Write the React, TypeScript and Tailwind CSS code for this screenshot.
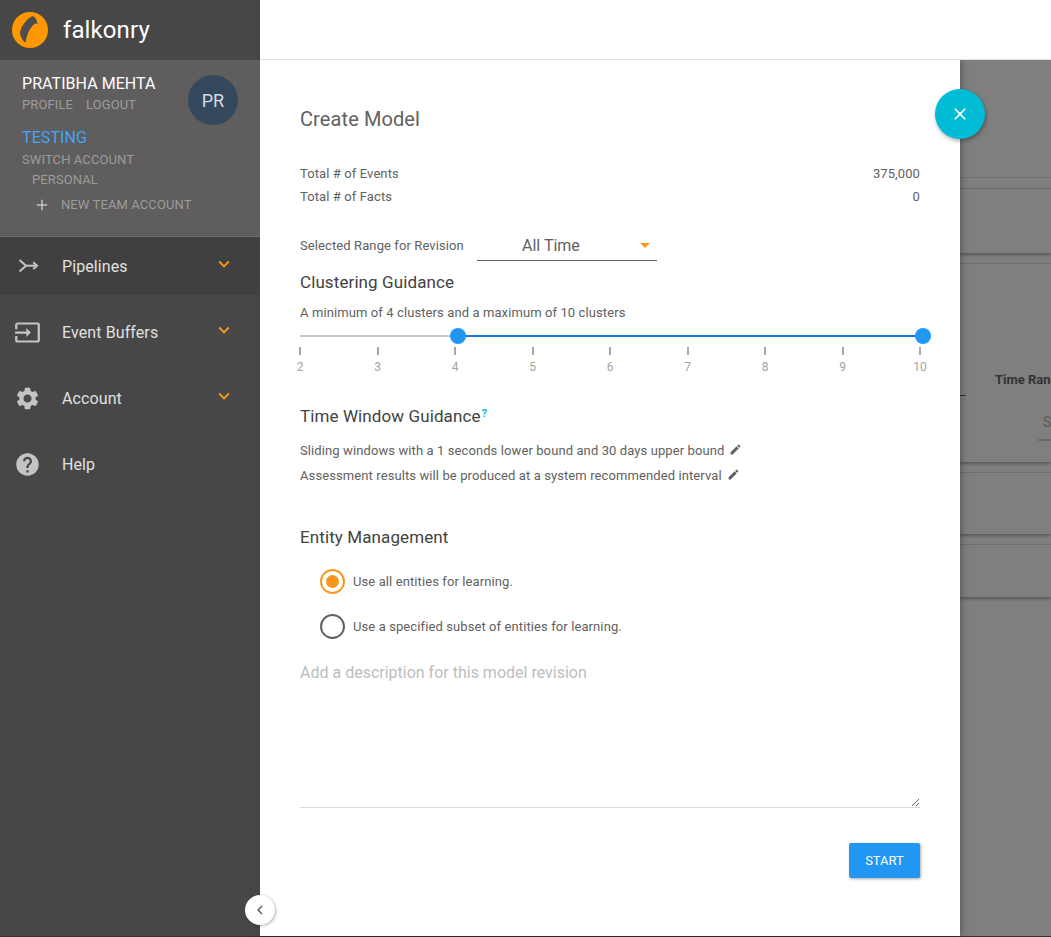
import { MdEdit, MdHelp, MdInput, MdKeyboardArrowDown, MdSettings, MdClose, MdAdd, MdChevronLeft } from "react-icons/md";

const PipelinesIcon = () => (
  <svg width="24" height="24" viewBox="0 0 24 24" fill="none" stroke="#c4c4c4" strokeWidth="2">
    <path d="M3.500 6 10 11.700 3.500 17.500" />
    <path d="M10 11.700h11" />
    <path d="M17.300 8.300 21 11.700 17.300 15" />
  </svg>
);

const Logo = () => (
  <svg width="36" height="36" viewBox="0 0 36 36" className="shrink-0">
    <circle cx="18" cy="18" r="18" fill="#ff9800" />
    <path d="M21 4C23.500 5 25 8.500 25.700 12C24 11 22.500 11.500 21.300 13C18.500 15.500 16.500 19.500 15 24C14.300 26 13.800 28.500 13.500 30.700C11 29 8.500 25 8 21C9 14 15 6 21 4Z" fill="#4d4d4d" />
  </svg>
);

const navItems = [
  { label: "Pipelines", icon: <PipelinesIcon />, arrow: true, active: true },
  { label: "Event Buffers", icon: <MdInput size={27} color="#c4c4c4" />, arrow: true },
  { label: "Account", icon: <MdSettings size={27} color="#c4c4c4" />, arrow: true },
  { label: "Help", icon: <MdHelp size={27} color="#c4c4c4" /> },
];

const Sidebar = () => (
  <aside className="w-[260px] shrink-0 bg-[#474747] flex flex-col relative z-10">
    <div className="h-[60px] flex items-center pl-3 gap-[15px]">
      <Logo />
      <span className="text-[24px] text-white tracking-[0.1px]">falkonry</span>
    </div>
    <div className="h-[177px] bg-[#5f5d5d] border-b border-[#6b6b6b] pl-[22px] pt-[13px] flex justify-between pr-[22px]">
      <div className="whitespace-nowrap w-[166px] shrink-0">
        <div className="text-[16px] leading-[22px] text-white tracking-[0.05px]">PRATIBHA MEHTA</div>
        <div className="flex gap-[13px] text-[13px] leading-[20px] text-[#9c9c9c] tracking-[0.1px]">
          <span>PROFILE</span>
          <span>LOGOUT</span>
        </div>
        <div className="mt-[12px] text-[16px] leading-[22px] text-[#42a5f5] tracking-[0.1px]">TESTING</div>
        <div className="text-[13px] leading-[22px] text-[#9c9c9c] tracking-[0.1px]">SWITCH ACCOUNT</div>
        <div className="text-[13px] leading-[18px] pl-[10px] text-[#9c9c9c] tracking-[0.1px]">PERSONAL</div>
        <div className="flex items-center mt-[7px] pl-[11px] text-[13px] leading-[18px] text-[#9c9c9c] tracking-[0.1px]">
          <MdAdd size={18} color="#c4c4c4" className="shrink-0" />
          <span className="ml-[10px]">NEW TEAM ACCOUNT</span>
        </div>
      </div>
      <div className="w-[50px] h-[50px] shrink-0 mt-[2px] rounded-full bg-[#34495e] text-[#d5dbe0] text-[18px] flex items-center justify-center">PR</div>
    </div>
    <nav>
      {navItems.map((item) => (
        <div
          key={item.label}
          className={`h-[66px] first:h-[58px] first:mb-[4px] flex items-center relative pl-[14px] ${item.active ? "bg-[#404040]" : ""}`}
        >
          <span className="w-[27px] h-[27px] flex items-center justify-center">{item.icon}</span>
          <span className="ml-[21px] pt-[1px] text-[16px] text-[#e0e0e0] tracking-[0.1px]">{item.label}</span>
          {item.arrow && (
            <MdKeyboardArrowDown size={22} color="#f7981d" className="absolute left-[213px] top-1/2 -translate-y-[13px]" />
          )}
        </div>
      ))}
    </nav>
  </aside>
);

const ticks = [2, 3, 4, 5, 6, 7, 8, 9, 10];

const RangeSlider = () => (
  <div className="h-[54px] pt-[12px] relative">
    <div className="h-[2px] bg-[#c8c8c8] mr-[-3px] relative">
      <div className="absolute left-[158px] right-0 top-0 bottom-0 bg-[#1976d2]" />
    </div>
    <div className="absolute left-[150px] top-[5px] w-4 h-4 rounded-full bg-[#2196f3]" />
    <div className="absolute left-[615px] top-[5px] w-4 h-4 rounded-full bg-[#2196f3]" />
    <div className="flex justify-between mt-[10px]">
      {ticks.map((t) => (
        <div key={t} className="w-0 flex flex-col items-center">
          <div className="w-[2px] h-[8px] shrink-0 bg-[#a8a8a8]" />
          <div className="text-[12px] leading-[16px] mt-[4px] text-[#a3a3a3]">{t}</div>
        </div>
      ))}
    </div>
  </div>
);

const Radio = ({ label, checked }: { label: string; checked?: boolean }) => (
  <div className="h-[45px] flex items-center pl-[20px] gap-[8px]">
    <div
      className={`w-[25px] h-[25px] rounded-full border-2 flex items-center justify-center ${checked ? "border-[#f7981d]" : "border-[#616161]"}`}
    >
      {checked && <div className="w-[13px] h-[13px] rounded-full bg-[#f7981d]" />}
    </div>
    <span className="pt-[1px] text-[13px] text-[#616161] tracking-[0.1px]">{label}</span>
  </div>
);

const Drawer = () => (
  <div className="absolute left-0 top-0 bottom-0 w-[700px] bg-white shadow-[0_0_8px_rgba(0,0,0,0.45)] pl-[40px] pr-[40px] pt-[46px]">
    <div className="text-[20px] leading-[26px] text-[#616161] tracking-[0.1px]">Create Model</div>
    <div className="mt-[30px] flex justify-between text-[13px] leading-[23px] text-[#616161] tracking-[0.1px]">
      <span>Total # of Events</span>
      <span>375,000</span>
    </div>
    <div className="flex justify-between text-[13px] leading-[23px] text-[#616161] tracking-[0.1px]">
      <span>Total # of Facts</span>
      <span>0</span>
    </div>
    <div className="mt-[23px] flex items-start h-[30px]">
      <span className="text-[13px] leading-[30px] text-[#616161] tracking-[0.1px] w-[177px]">Selected Range for Revision</span>
      <div className="w-[180px] h-[30px] border-b border-[#616161] flex justify-between items-center pl-[45px] pr-[7px]">
        <span className="text-[16px] text-[#616161]">All Time</span>
        <div className="w-0 h-0 border-l-[5px] border-r-[5px] border-t-[5px] border-l-transparent border-r-transparent border-t-[#f7981d]" />
      </div>
    </div>
    <div className="mt-[9px] text-[17px] leading-[24px] text-[#424242] tracking-[0.1px]">Clustering Guidance</div>
    <div className="mt-[9px] text-[13px] leading-[20px] text-[#616161] tracking-[0.1px]">A minimum of 4 clusters and a maximum of 10 clusters</div>
    <RangeSlider />
    <div className="mt-[27px] text-[17px] leading-[24px] text-[#424242] tracking-[0.1px]">
      Time Window Guidance<sup className="text-[11px] font-bold text-[#00bcd4] ml-px">?</sup>
    </div>
    <div className="mt-[10px] flex items-center gap-[5px] text-[13px] leading-[25px] text-[#616161] tracking-[0.1px]">
      Sliding windows with a 1 seconds lower bound and 30 days upper bound
      <MdEdit size={13} color="#616161" className="-translate-y-[1px]" />
    </div>
    <div className="flex items-center gap-[5px] text-[13px] leading-[25px] text-[#616161] tracking-[0.1px]">
      Assessment results will be produced at a system recommended interval
      <MdEdit size={13} color="#616161" className="-translate-y-[1px]" />
    </div>
    <div className="mt-[37px] text-[17px] leading-[24px] text-[#424242] tracking-[0.1px]">Entity Management</div>
    <div className="mt-[10px]">
      <Radio label="Use all entities for learning." checked />
      <Radio label="Use a specified subset of entities for learning." />
    </div>
    <textarea
      className="mt-[11px] pt-[1px] block w-full h-[148px] border-b border-[#d9d9d9] text-[16px] leading-[24px] outline-none placeholder:text-[#bdbdbd]"
      placeholder="Add a description for this model revision"
    />
    <div className="mt-[35px] flex justify-end">
      <button className="w-[71px] h-[35px] rounded-[2px] bg-[#2196f3] text-white text-[13px] shadow-[1px_1px_3px_rgba(0,0,0,0.35)]">START</button>
    </div>
  </div>
);

const BackgroundCard = ({ height, children }: { height: number; children?: React.ReactNode }) => (
  <div className="border-t border-[#6e6e6e] bg-[#7f7f7f] shadow-[0_2px_3px_rgba(0,0,0,0.3)] mt-[10px] relative" style={{ height }}>
    {children}
  </div>
);

const Background = () => (
  <div className="h-full bg-[#7f7f7f] pl-[700px] overflow-hidden">
    <div className="h-[118px] border-b border-[#717171]" />
    <BackgroundCard height={65} />
    <BackgroundCard height={199}>
      <div className="absolute left-0 top-[131px] w-[6px] h-px bg-[#333]" />
      <div className="absolute left-[35px] top-[106px] text-[13px] font-bold text-[#333] whitespace-nowrap">Time Range</div>
      <div className="absolute left-[78px] top-[148px] w-[60px] border-b-2 border-[#6a6a6a] h-[29px] pl-[5px] text-[14px] text-[#5a5a5a]">Select</div>
    </BackgroundCard>
    <BackgroundCard height={62} />
    <BackgroundCard height={53} />
  </div>
);

export default function App() {
  return (
    <div className="h-[937px] w-[1051px] overflow-hidden flex flex-col font-['Roboto',sans-serif]">
      <div className="flex flex-1 min-h-0">
        <Sidebar />
        <main className="flex-1 flex flex-col min-w-0 relative">
          <div className="h-[60px] shrink-0 bg-white border-b border-[#e0e0e0] relative z-10" />
          <div className="flex-1 relative min-h-0">
            <Background />
            <Drawer />
            <button className="absolute left-[675px] top-[29px] w-[50px] h-[50px] rounded-full bg-[#00bcd4] shadow-[1px_2px_4px_rgba(0,0,0,0.35)] flex items-center justify-center">
              <MdClose size={20} color="#fff" />
            </button>
          </div>
          <button className="absolute z-20 left-[-15px] top-[895px] w-[30px] h-[30px] rounded-full bg-white shadow-[1px_1px_3px_rgba(0,0,0,0.3)] flex items-center justify-center">
            <MdChevronLeft size={18} color="#616161" />
          </button>
        </main>
      </div>
      <div className="h-px bg-[#333] shrink-0" />
    </div>
  );
}
